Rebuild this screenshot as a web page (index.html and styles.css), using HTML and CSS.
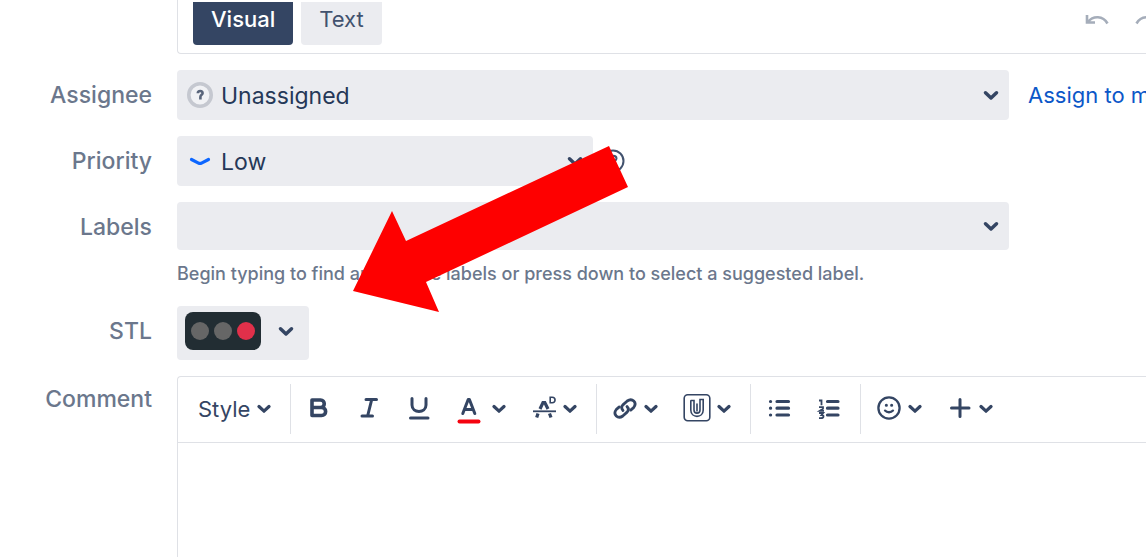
FILE: index.html
```html
<!DOCTYPE html>
<html lang="en">
<head>
<meta charset="utf-8">
<meta name="viewport" content="width=device-width, initial-scale=1">
<title>Edit issue</title>
<link rel="stylesheet" href="styles.css">
</head>
<body>
<svg class="defs" aria-hidden="true">
  <symbol id="chevron" viewBox="0 0 14 10"><path d="M2 2.500 7 7.200l5-4.700" fill="none" stroke="currentColor" stroke-width="3.200" stroke-linecap="round" stroke-linejoin="round"/></symbol>
</svg>
<form class="form">
  <div class="panel panel-top wide">
    <div class="tabs">
      <button type="button" class="tab tab-active">Visual</button>
      <button type="button" class="tab">Text</button>
    </div>
    <div class="history">
      <button type="button" class="plain" aria-label="Undo"><svg width="26" height="16" viewBox="0 0 26 16" fill="none" stroke="#a5adba" stroke-width="2.600"><path d="M3 1v7.500h8M4 8C9 1.500 19 1.500 23.500 9.500"/></svg></button>
      <button type="button" class="plain" aria-label="Redo"><svg width="26" height="16" viewBox="0 0 26 16" fill="none" stroke="#a5adba" stroke-width="2.600"><path d="M23 1v7.500h-8M22 8C17 1.500 7 1.500 2.500 9.500"/></svg></button>
    </div>
  </div>

  <label class="label" for="assignee">Assignee</label>
  <div class="field">
    <svg class="lead" width="26" height="28" viewBox="0 0 26 28"><circle cx="13" cy="14" r="11.200" fill="#f1f2f5" stroke="#c5c8d0" stroke-width="3.600"/><path d="M10.800 12.200c0-3 4.800-3 4.800 0 0 1.700-2.200 1.600-2.200 3.800v2.500" fill="none" stroke="#59657b" stroke-width="2.600"/></svg>
    <select class="control" id="assignee"><option>Unassigned</option></select>
    <svg class="chev" width="16" height="11"><use href="#chevron"/></svg>
  </div>
  <a class="link" href="#">Assign to me</a>

  <label class="label" for="priority">Priority</label>
  <div class="pair">
    <div class="field">
      <svg class="lead" width="26" height="28" viewBox="0 0 26 28"><path d="m4.500 12.500 7 3.600q1.500.7 3 0l7-3.600" fill="none" stroke="#0c66ff" stroke-width="3.200" stroke-linecap="round"/></svg>
      <select class="control" id="priority"><option>Low</option></select>
      <svg class="chev" width="16" height="11"><use href="#chevron"/></svg>
    </div>
    <button type="button" class="plain help" aria-label="Priority help"><svg width="24" height="24" viewBox="0 0 24 24" fill="none" stroke="#42526e" stroke-width="2"><circle cx="12" cy="12" r="10.500"/><path d="M9 10c0-4.500 6.500-4 6.500-.5 0 2.500-3.500 2.300-3.500 5M12 16v2"/></svg></button>
  </div>

  <label class="label" for="labels">Labels</label>
  <div class="labels-cell">
    <div class="field">
      <input class="control control-short" id="labels" type="text">
      <svg class="chev" width="16" height="11"><use href="#chevron"/></svg>
    </div>
    <p class="hint">Begin typing to find and create labels or press down to select a suggested label.</p>
  </div>

  <label class="label" for="stl">STL</label>
  <div>
    <button type="button" class="stl" id="stl" aria-label="Red">
      <span class="lights"><span class="light"></span><span class="light"></span><span class="light light-red"></span></span>
      <svg width="16" height="11"><use href="#chevron"/></svg>
    </button>
  </div>

  <label class="label label-comment" for="comment">Comment</label>
  <div class="panel editor wide">
    <div class="toolbar">
      <div class="group group-style">
        <button type="button" class="tool style-tool">Style <svg width="14" height="10"><use href="#chevron"/></svg></button>
      </div>
      <div class="group">
        <button type="button" class="tool" aria-label="Bold"><svg width="24" height="32" viewBox="0 0 24 32" fill="none" stroke="currentColor" stroke-width="3.600" stroke-linejoin="round"><path d="M5 7h8.500c5 0 5 7.500 0 7.500H5V7Zm0 7.500h9.500c5.500 0 5.500 8 0 8H5v-8Z"/></svg></button>
        <button type="button" class="tool" aria-label="Italic"><svg width="24" height="32" viewBox="0 0 24 32" fill="none" stroke="currentColor" stroke-width="3" stroke-linecap="round"><path d="M9 6.500h10.500M5 23h10.500M14.600 7l-4 16"/></svg></button>
        <button type="button" class="tool" aria-label="Underline"><svg width="24" height="32" viewBox="0 0 24 32" fill="none" stroke="currentColor" stroke-width="3" stroke-linecap="round"><path d="M5 5.500V12c0 8.500 14 8.500 14 0V5.500M3.500 25h17.500"/></svg></button>
        <button type="button" class="tool tool-color" aria-label="Text colour"><svg width="24" height="32" viewBox="0 0 24 32" fill="none" stroke="currentColor" stroke-width="3" stroke-linecap="round" stroke-linejoin="round"><path d="m5.800 20.500 5.400-14h1.200l5.400 14M8 16.500h7.600"/><path d="M2.500 28.500h19" stroke="#f5030f" stroke-width="4"/></svg><svg width="14" height="10"><use href="#chevron"/></svg></button>
        <button type="button" class="tool" aria-label="More formatting"><svg width="24" height="32" viewBox="0 0 24 32" fill="none" stroke="currentColor"><path d="m8 16 3-6.500h1.800l3.200 6.500M6 20.500l-1.300 4M17.500 20.500l1.500 4" stroke-width="3.200"/><path d="M1 18.300h23" stroke-width="1.800"/><path d="M18.200 4.200h2c3.800 0 3.800 5.600 0 5.600h-2V4.200Z" stroke-width="1.600"/></svg><svg width="14" height="10"><use href="#chevron"/></svg></button>
      </div>
      <div class="group">
        <button type="button" class="tool" aria-label="Link"><svg width="24" height="32" viewBox="0 0 24 32" fill="none" stroke="currentColor" stroke-width="2.800" stroke-linecap="round"><path d="M10 17.500c-2-2.200-1.500-4.300.2-5.900l4-3.600c5-3.500 10.300 1.500 6.500 6.500l-3 2.600"/><path d="M14 13.500c2 2.200 1.500 4.300-.2 5.900l-4 3.600c-5 3.500-10.300-1.500-6.500-6.500l3-2.600"/></svg><svg width="14" height="10"><use href="#chevron"/></svg></button>
        <button type="button" class="tool" aria-label="Attachment"><svg width="26" height="32" viewBox="0 0 26 32" fill="none" stroke="currentColor" stroke-width="1.600" stroke-linecap="round"><rect x="0.200" y="1.800" width="25.600" height="26" rx="3.500"/><path d="M6.800 8V17c0 8.500 12.400 8.500 12.400 0V6.500h-3.200V17c0 4.200-6 4.200-6 0V7.500H7M13 11v7"/></svg><svg width="14" height="10"><use href="#chevron"/></svg></button>
      </div>
      <div class="group">
        <button type="button" class="tool" aria-label="Bullet list"><svg width="24" height="32" viewBox="0 0 24 32" fill="none" stroke="currentColor" stroke-width="3.200" stroke-linecap="round"><path d="M10 8.500h11.500M10 15.200h11.500M10 22h11.500M3.500 8.500h.1M3.500 15.200h.1M3.500 22h.1"/></svg></button>
        <button type="button" class="tool" aria-label="Numbered list"><svg width="24" height="32" viewBox="0 0 24 32" fill="none" stroke="currentColor"><path d="M10.500 8.500H21M10.500 15.200H21M10.500 22H21" stroke-width="3.200" stroke-linecap="round"/><path d="M2 7.500h2.500v4.800M2 14.200h4v1.500l-3.300 2.200H7M2 20h4.200l-1.700 2c3 0 2.500 3.100-.5 3.100H2" stroke-width="1.800"/></svg></button>
      </div>
      <div class="group group-last">
        <button type="button" class="tool" aria-label="Emoji"><svg width="24" height="32" viewBox="0 0 24 32" fill="none" stroke="currentColor" stroke-width="2.300" stroke-linecap="round"><circle cx="12" cy="15" r="10.600"/><path d="M8 17.600c2 2.200 6 2.200 8 0"/><path d="M9.300 12.200h.1M14.600 12.200h.1" stroke-width="3"/></svg><svg width="14" height="10"><use href="#chevron"/></svg></button>
        <button type="button" class="tool" aria-label="Insert"><svg width="24" height="32" viewBox="0 0 24 32" fill="none" stroke="currentColor" stroke-width="3" stroke-linecap="round"><path d="M12 6.500v17M3.500 15h17.500"/></svg><svg width="14" height="10"><use href="#chevron"/></svg></button>
      </div>
    </div>
    <textarea class="comment" id="comment"></textarea>
  </div>
</form>
<svg class="arrow" width="276" height="168" viewBox="0 0 276 168" aria-hidden="true"><path d="M0 145 39 65l14 30L256 0l19 41-202 95 13 30Z" fill="#fe0000"/></svg>
</body>
</html>
```
FILE: styles.css
```css
* { box-sizing: border-box; }
body {
  margin: 0;
  overflow: hidden;
  background: #fff;
  color: #253858;
  font-family: Inter, "Liberation Sans", sans-serif;
  font-size: 22px;
  line-height: 28px;
}
button, input, select, textarea {
  font: inherit;
  color: inherit;
  border: 0;
  margin: 0;
}
svg { display: block; flex: none; overflow: visible; }
.defs { position: absolute; width: 0; height: 0; }
.form {
  display: grid;
  grid-template-columns: 152px minmax(0, 1fr) 118px;
  row-gap: 16px;
  min-height: 100vh;
  grid-template-rows: auto auto auto auto auto 1fr;
}
.wide { grid-column: 2 / 4; margin-left: 25px; }
.form > div:not(.wide) { grid-column: 2; margin: 0 19px 0 25px; }
.panel { border: 1px solid #dfe1e6; border-right: 0; }
.panel-top {
  display: flex;
  justify-content: space-between;
  border-top: 0;
  border-radius: 0 0 0 4px;
  padding: 2px 0 8px 15px;
}
.tabs { display: flex; gap: 8px; }
.tab {
  padding: 4px 18px 12px;
  border-radius: 0 0 4px 4px;
  background: #ebecf0;
  color: #42526e;
  line-height: 27px;
}
.tab-active { background: #344563; color: #fff; font-weight: 500; }
.history { display: flex; gap: 24px; margin-right: -14px; padding-top: 12px; align-items: flex-start; }
.plain { padding: 0; background: none; }
.label {
  grid-column: 1;
  padding-top: 11px;
  text-align: right;
  color: #6b778c;
  font-size: 23px;
  font-weight: 500;
}
.label-comment { padding-top: 9px; }
.field { display: grid; align-items: center; border-radius: 4px; background: #ebecf0; }
.field > * { grid-area: 1 / 1; }
.control {
  width: 100%;
  height: 50px;
  padding: 2px 44px 0;
  border-radius: 4px;
  background: transparent;
  font-size: 23px;
  appearance: none;
}
.control-short { height: 48px; }
.lead { justify-self: start; margin-left: 10px; pointer-events: none; }
.chev { justify-self: end; margin-right: 10px; color: #344563; pointer-events: none; }
.link {
  grid-column: 3;
  padding-top: 11px;
  color: #0c57c8;
  text-decoration: none;
  white-space: nowrap;
}
.pair { display: grid; grid-template-columns: 1fr 1fr; align-items: center; }
.help { justify-self: start; margin-left: 8px; }
.hint { margin: 10px 0 2px; font-size: 18px; font-weight: 500; line-height: 28px; color: #6b778c; }
.stl {
  display: flex;
  align-items: center;
  gap: 17px;
  padding: 6px 15px 10px 8px;
  border-radius: 4px;
  background: #ebecf0;
  color: #344563;
}
.lights {
  display: flex;
  align-items: center;
  gap: 5px;
  height: 38px;
  padding: 0 6px;
  border-radius: 8px;
  background: #222d33;
}
.light { width: 18px; height: 18px; border-radius: 50%; background: #666; }
.light-red { background: #e1304a; }
.editor { display: flex; flex-direction: column; border-bottom: 0; border-radius: 4px 0 0 0; }
.toolbar { display: flex; padding: 7px 0 8px; border-bottom: 1px solid #dfe1e6; }
.group { display: flex; padding: 0 6px 0 3px; border-right: 1px solid #dfe1e6; }
.group-style { padding: 0 6px 0 7px; }
.group-last { border-right: 0; }
.tool {
  display: flex;
  align-items: center;
  gap: 7px;
  height: 50px;
  padding: 0 13px;
  background: none;
  color: #344563;
}
.tool-color { gap: 11px; }
.comment { flex: 1; width: 100%; padding: 16px 20px; background: transparent; resize: none; }
.arrow { position: absolute; left: 353px; top: 146px; pointer-events: none; }
```
